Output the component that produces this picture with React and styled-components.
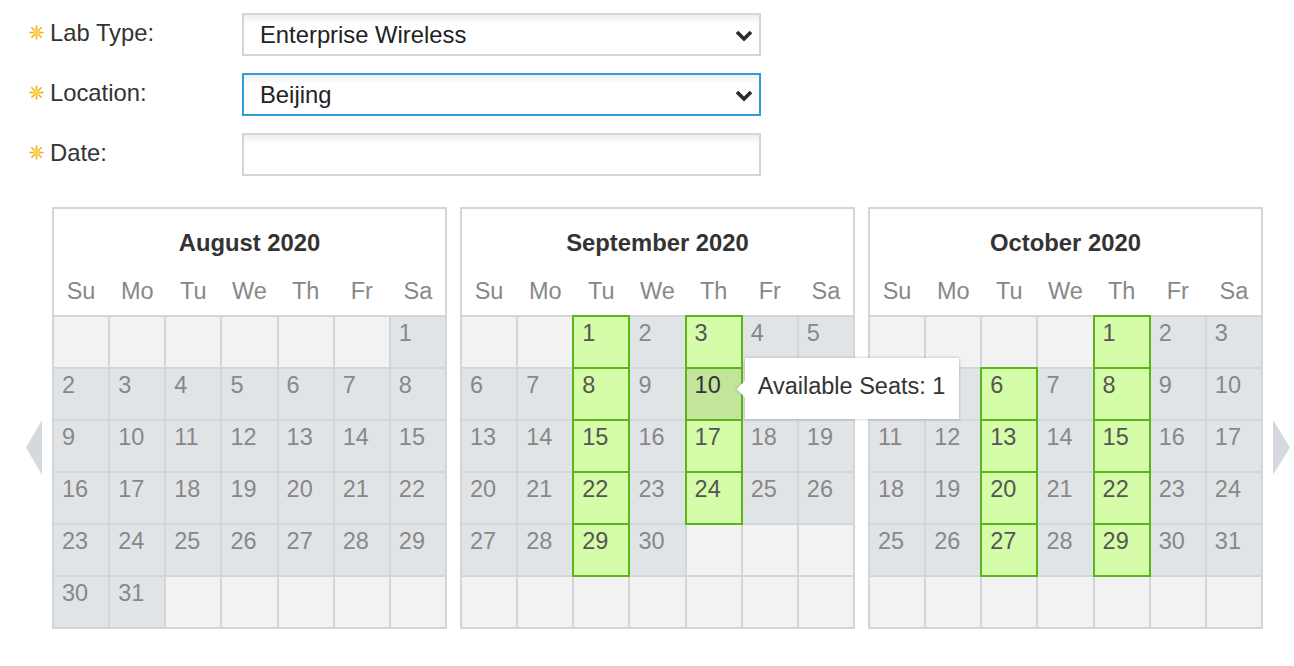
import styled, { createGlobalStyle } from 'styled-components';

const GlobalStyle = createGlobalStyle`
  body {
    margin: 0;
    background: #fff;
    font-family: "Liberation Sans", Arial, sans-serif;
  }
`;

const Page = styled.div`
  width: 1294px;
  height: 666px;
  overflow: hidden;
`;

const Form = styled.div`
  display: flex;
  flex-direction: column;
  gap: 17px;
  padding: 13px 0 0 29px;
`;

const Row = styled.div`
  display: flex;
  align-items: center;
`;

const Label = styled.div`
  width: 213px;
  display: flex;
  align-items: center;
  gap: 6px;
  font-size: 23.8px;
  color: #333;
  margin-top: -4px;
`;

const Field = styled.div`
  position: relative;
  width: 519px;
  height: 43px;
  box-sizing: border-box;
  border: 2px solid ${(p) => (p.$focused ? '#2b9fd6' : '#d3d6d9')};
  background: linear-gradient(#efefef, #fff 9px);
  display: flex;
  align-items: center;
  padding: 0 16px;
  font-size: 23.8px;
  color: #222;
`;

const Chevron = styled.svg`
  position: absolute;
  right: 6px;
  top: 15px;
`;

const CalendarArea = styled.div`
  display: flex;
  align-items: center;
  margin-top: 31px;
  padding-left: 26px;
`;

const Arrow = styled.svg`
  margin-top: 58px;
  flex: none;
`;

const Months = styled.div`
  display: flex;
  gap: 13px;
  margin: 0 10px;
`;

const Month = styled.div`
  width: 395px;
  box-sizing: border-box;
  border: 2px solid #d3d6d9;
  background: #d3d6d9;
`;

const MonthHead = styled.div`
  height: 106px;
  background: #fff;
  display: flex;
  flex-direction: column;
`;

const Title = styled.div`
  font-weight: bold;
  font-size: 23.8px;
  color: #333;
  text-align: center;
  padding-top: 20px;
  height: 49px;
`;

const Grid = styled.div`
  display: grid;
  grid-template-columns: repeat(7, 1fr);
  column-gap: 2px;
  row-gap: 2px;
`;

const DayName = styled.div`
  text-align: center;
  font-size: 23.5px;
  color: #888;
`;

const Cells = styled(Grid)`
  margin-top: 2px;
  grid-auto-rows: 50px;
`;

const Cell = styled.div`
  position: relative;
  box-sizing: border-box;
  padding: 3px 0 0 8px;
  font-size: 23.5px;
  color: ${(p) => (p.$hover ? '#333' : p.$open ? '#555' : '#888')};
  background: ${(p) =>
    p.$hover ? '#c2e59b' : p.$open ? '#d5fca9' : p.$day ? '#e1e4e7' : '#f2f2f2'};
  box-shadow: ${(p) => (p.$open ? '0 0 0 2px #5db31b' : 'none')};
  z-index: ${(p) => (p.$hover ? 3 : p.$open ? 1 : 0)};
`;

const Tooltip = styled.div`
  position: absolute;
  left: calc(100% + 4px);
  top: -11px;
  width: 214px;
  height: 61px;
  box-sizing: border-box;
  background: #fff;
  box-shadow: 0 0 3px rgba(0, 0, 0, 0.25);
  display: flex;
  align-items: center;
  padding: 0 0 5px 13px;
  font-size: 23.5px;
  color: #333;
  white-space: nowrap;
  &::before {
    content: '';
    position: absolute;
    left: -6px;
    top: 25px;
    width: 12px;
    height: 12px;
    background: #fff;
    transform: rotate(45deg);
    box-shadow: -2px 2px 2px -1px rgba(0, 0, 0, 0.15);
  }
`;

const Star = () => (
  <svg width="15" height="15" viewBox="0 0 16 16">
    <g stroke="#f7a91e" strokeWidth="1.6" strokeLinecap="round">
      <line x1="8" y1="1" x2="8" y2="15" />
      <line x1="1" y1="8" x2="15" y2="8" />
      <line x1="3" y1="3" x2="13" y2="13" />
      <line x1="13" y1="3" x2="3" y2="13" />
    </g>
    <circle cx="8" cy="8" r="3.6" fill="#fbd24a" />
  </svg>
);

const Down = () => (
  <Chevron width="18" height="12" viewBox="0 0 18 12">
    <polyline points="2,2 9,9 16,2" fill="none" stroke="#2b2b2b" strokeWidth="3.6" />
  </Chevron>
);

const months = [
  { name: 'August 2020', start: 6, days: 31, open: [] },
  { name: 'September 2020', start: 2, days: 30, open: [2, 4], hover: 10 },
  { name: 'October 2020', start: 4, days: 31, open: [2, 4] },
];

const dayNames = ['Su', 'Mo', 'Tu', 'We', 'Th', 'Fr', 'Sa'];

const MonthView = ({ m }) => {
  const cells = [];
  for (let i = 0; i < 42; i++) {
    const d = i - m.start + 1;
    const isDay = d >= 1 && d <= m.days;
    const open = isDay && m.open.includes(i % 7);
    const hover = isDay && d === m.hover;
    cells.push(
      <Cell key={i} $day={isDay} $open={open} $hover={hover}>
        {isDay ? d : ''}
        {hover && <Tooltip>Available Seats: 1</Tooltip>}
      </Cell>
    );
  }
  return (
    <Month>
      <MonthHead>
        <Title>{m.name}</Title>
        <Grid>
          {dayNames.map((n) => (
            <DayName key={n}>{n}</DayName>
          ))}
        </Grid>
      </MonthHead>
      <Cells>{cells}</Cells>
    </Month>
  );
};

export default function App() {
  return (
    <Page>
      <GlobalStyle />
      <Form>
        <Row>
          <Label>
            <Star />
            Lab Type:
          </Label>
          <Field>
            Enterprise Wireless
            <Down />
          </Field>
        </Row>
        <Row>
          <Label>
            <Star />
            Location:
          </Label>
          <Field $focused>
            Beijing
            <Down />
          </Field>
        </Row>
        <Row>
          <Label>
            <Star />
            Date:
          </Label>
          <Field />
        </Row>
      </Form>
      <CalendarArea>
        <Arrow width="16" height="55" viewBox="0 0 16 55">
          <polygon points="16,0 0,27.5 16,55" fill="#d5d9dd" />
        </Arrow>
        <Months>
          {months.map((m) => (
            <MonthView key={m.name} m={m} />
          ))}
        </Months>
        <Arrow width="17" height="55" viewBox="0 0 17 55">
          <polygon points="0,0 17,27.5 0,55" fill="#d5d9dd" />
        </Arrow>
      </CalendarArea>
    </Page>
  );
}
